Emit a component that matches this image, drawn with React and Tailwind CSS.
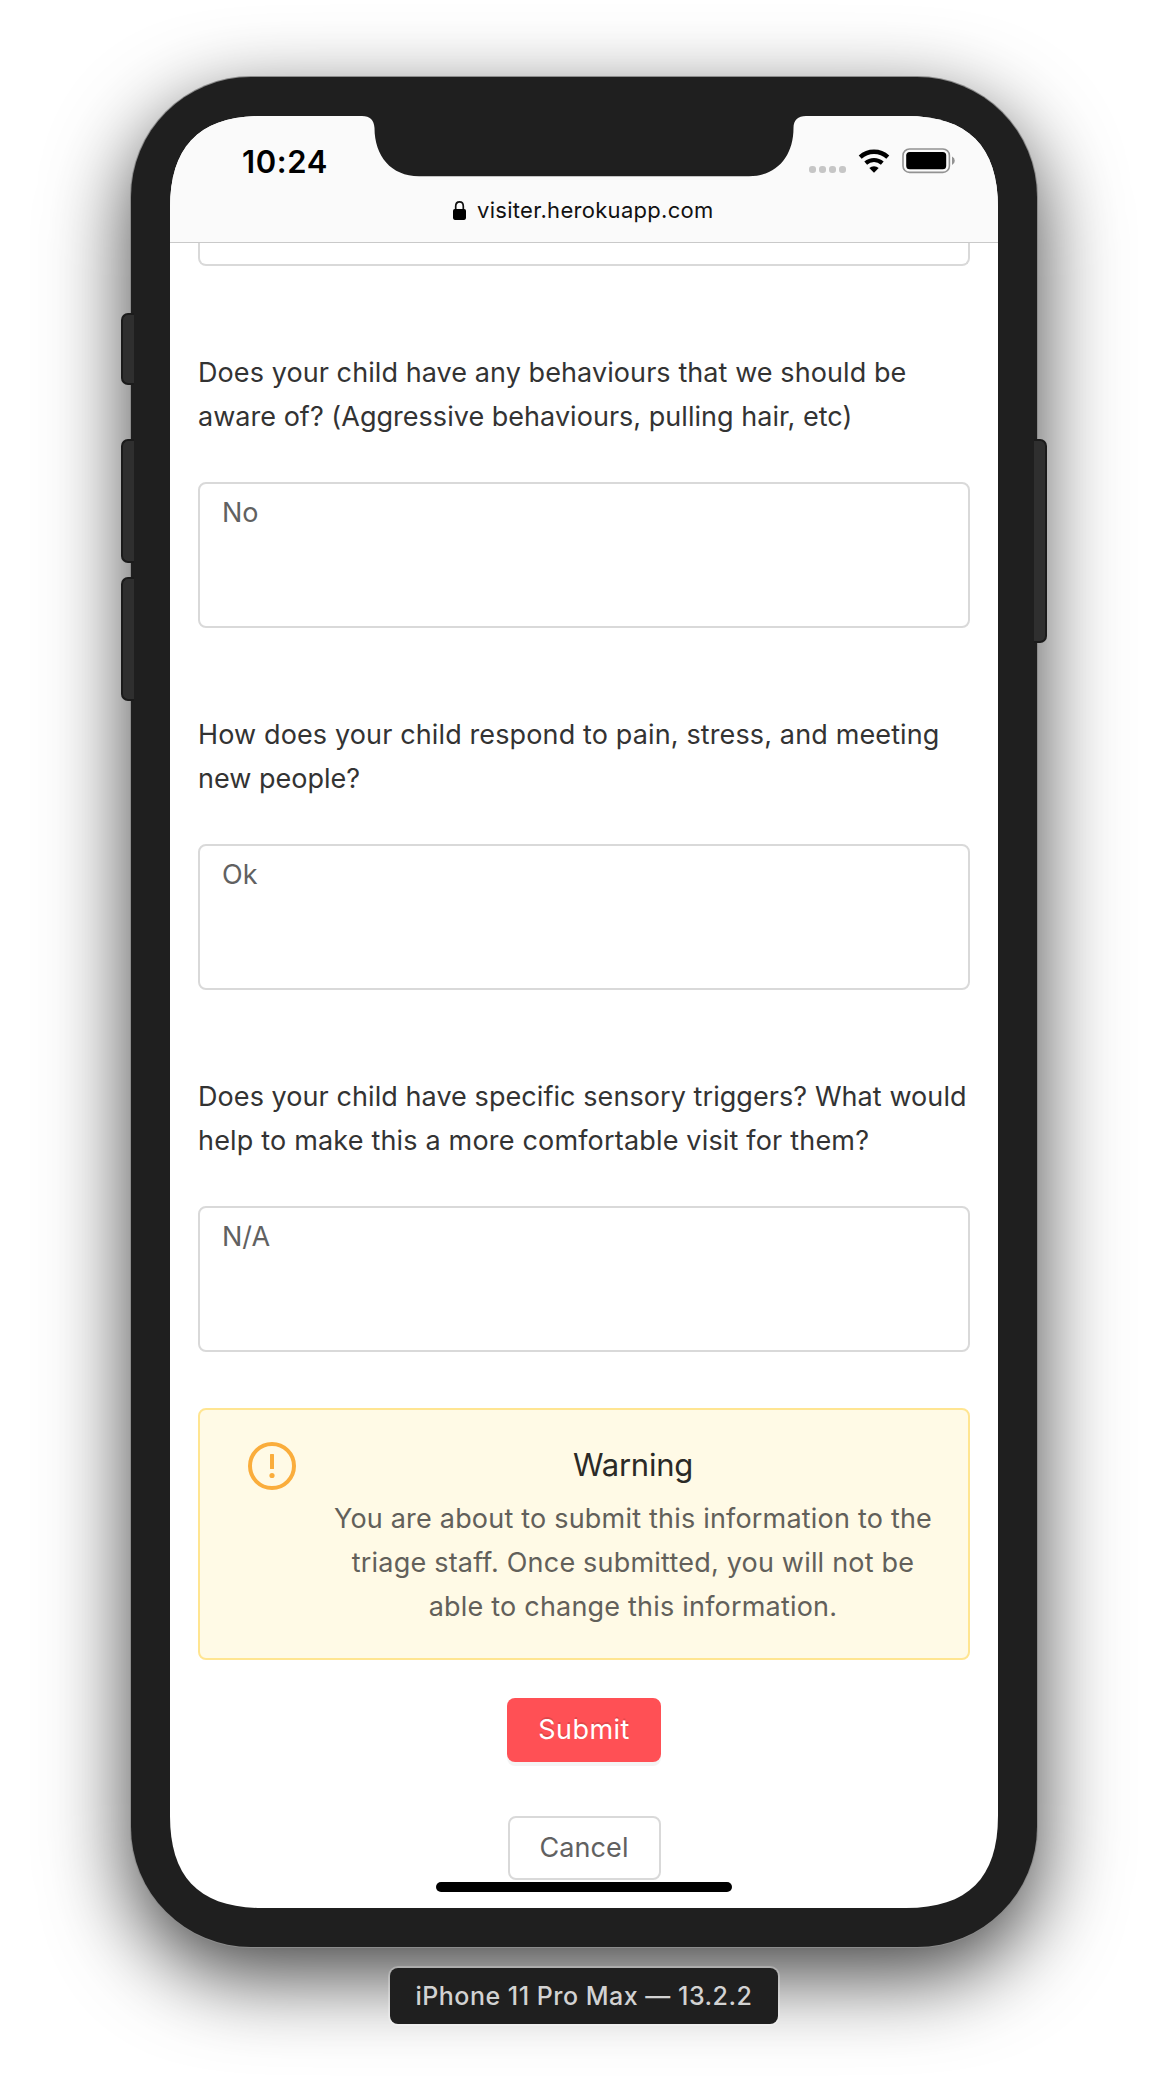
const QUESTIONS = [
  {
    lines: [
      { text: "Does your child have any behaviours that we should be", tracking: "tracking-[0.08px]" },
      { text: "aware of? (Aggressive behaviours, pulling hair, etc)", tracking: "tracking-[0.03px]" },
    ],
    answer: "No",
  },
  {
    lines: [
      { text: "How does your child respond to pain, stress, and meeting", tracking: "tracking-[0.13px]" },
      { text: "new people?", tracking: "tracking-[0.02px]" },
    ],
    answer: "Ok",
  },
  {
    lines: [
      { text: "Does your child have specific sensory triggers? What would", tracking: "tracking-[0.07px]" },
      { text: "help to make this a more comfortable visit for them?", tracking: "tracking-[0.18px]" },
    ],
    answer: "N/A",
  },
];

function Notch() {
  return (
    <svg className="absolute left-[190px] top-0 h-[61px] w-[448px]" viewBox="0 0 448 61" aria-hidden="true">
      <path
        d="M0 0H2C10 0 14 4 14.500 12C14.500 40 31 60.200 59 60.200H389C417 60.200 433.500 40 433.500 12C433.500 4 438 0 446 0H448V-1H0Z"
        fill="#1f1f1f"
      />
    </svg>
  );
}

function SignalDots() {
  return (
    <div className="mt-[24.500px] flex gap-[3px]">
      {[0, 1, 2, 3].map((dot) => (
        <span key={dot} className="size-[7px] rounded-[3px] bg-[#c6c6c6]" />
      ))}
    </div>
  );
}

function WifiIcon() {
  return (
    <svg className="mt-2 h-6 w-8" viewBox="0 0 32 24" aria-hidden="true">
      <path d="M2.200 8.100A20.500 20.500 0 0 1 29.800 8.100" fill="none" stroke="#000" strokeWidth="4.400" />
      <path d="M7.700 14.100A12.600 12.600 0 0 1 24.300 14.100" fill="none" stroke="#000" strokeWidth="4.200" />
      <path d="M16 23.700L11.300 19A7 7 0 0 1 20.700 19Z" fill="#000" />
    </svg>
  );
}

function BatteryIcon() {
  return (
    <svg className="mt-[7px] h-[26px] w-[54px]" viewBox="0 0 54 26" aria-hidden="true">
      <rect x="1" y="1" width="46.400" height="23.400" rx="6.500" fill="none" stroke="#929292" strokeWidth="1.600" />
      <rect x="4.200" y="4" width="40" height="17.200" rx="3.500" fill="#000" />
      <path d="M50 8.500Q52.800 9.700 52.800 12.700Q52.800 15.700 50 16.900Z" fill="#929292" />
    </svg>
  );
}

function LockIcon() {
  return (
    <svg className="mt-[9px] h-[19px] w-[13px]" viewBox="0 0 13 19" aria-hidden="true">
      <path d="M2.700 9V5.200C2.700 2.600 4.300 0.900 6.500 0.900S10.300 2.600 10.300 5.200V9" fill="none" stroke="#111" strokeWidth="1.700" />
      <rect x="0" y="7.900" width="13" height="11" rx="1.800" fill="#000" />
    </svg>
  );
}

function WarningIcon() {
  return (
    <svg className="size-12 shrink-0" viewBox="0 0 48 48" aria-hidden="true">
      <circle cx="24" cy="24" r="22" fill="none" stroke="#faad3c" strokeWidth="4" />
      <rect x="22" y="12" width="4" height="15" rx="0.500" fill="#faad3c" />
      <circle cx="24" cy="33.500" r="2.600" fill="#faad3c" />
    </svg>
  );
}

function BrowserHeader() {
  return (
    <header className="relative h-[127px] border-b border-[#c9c9c9] bg-[#fafafa] text-black">
      <Notch />
      <div className="flex h-[76px] items-start justify-between pr-[42px] pl-[72px] pt-[25px]">
        <span className="pt-px text-[31px] font-semibold leading-10 tracking-[0.6px]">10:24</span>
        <div className="flex items-start gap-3">
          <SignalDots />
          <WifiIcon />
          <BatteryIcon />
        </div>
      </div>
      <div className="flex h-9 gap-[11px] pl-[283px]">
        <LockIcon />
        <span className="text-[22px] leading-9 tracking-[0.3px] text-[#111]">visiter.herokuapp.com</span>
      </div>
    </header>
  );
}

function Question({ lines, answer }) {
  return (
    <section className="mt-[85px]">
      <label className="block text-[27px] leading-[44px] text-[#333]">
        {lines.map((line) => (
          <span key={line.text} className={`block whitespace-nowrap ${line.tracking}`}>
            {line.text}
          </span>
        ))}
      </label>
      <div className="mt-[43px] h-[146px] rounded-lg border-2 border-[#d9d9d9] bg-white pl-[22px] pt-[7px] text-[27px] leading-[44px] text-[#616161]">
        {answer}
      </div>
    </section>
  );
}

function WarningBox() {
  return (
    <section className="mt-14 flex h-[252px] rounded-lg border-2 border-[#ffe591] bg-[#fffae6] pr-[30px] pl-12 pt-8">
      <WarningIcon />
      <div className="ml-8 flex-1 text-center">
        <h2 className="mb-2.5 text-[31px] leading-[45px] tracking-[-0.25px] text-[#2b2a26]">Warning</h2>
        <p className="whitespace-nowrap text-[27px] leading-[44px] tracking-[0.2px] text-[#62605a]">
          You are about to submit this information to the
          <br />
          triage staff. Once submitted, you will not be
          <br />
          able to change this information.
        </p>
      </div>
    </section>
  );
}

export default function App() {
  return (
    <div className="flex h-[2096px] w-[1168px] flex-col items-center overflow-hidden bg-white pt-[77px] font-['Inter',sans-serif]">
      <div className="relative h-[1870px] w-[906px] shrink-0 rounded-[120px] bg-[#1f1f1f] p-[39px] shadow-[0_0_0_1px_#8c8c8c,0_28px_84px_rgba(0,0,0,0.75)]">
        <span className="absolute -left-2.5 top-[236px] h-[72px] w-[13px] rounded-l-[7px] border-2 border-r-0 border-[#1b1b1b] bg-[#2f2f2f]" />
        <span className="absolute -left-2.5 top-[362px] h-[124px] w-[13px] rounded-l-[7px] border-2 border-r-0 border-[#1b1b1b] bg-[#2f2f2f]" />
        <span className="absolute -left-2.5 top-[500px] h-[124px] w-[13px] rounded-l-[7px] border-2 border-r-0 border-[#1b1b1b] bg-[#2f2f2f]" />
        <span className="absolute -right-2.5 top-[362px] h-[204px] w-[13px] rounded-r-[7px] border-2 border-l-0 border-[#1b1b1b] bg-[#2f2f2f]" />

        <div className="relative h-[1792px] w-[828px] overflow-hidden bg-white [clip-path:path('M0_92C0_30_30_0_92_0H736C798_0_828_30_828_92V1700C828_1762_798_1792_736_1792H92C30_1792_0_1762_0_1700Z')]">
          <BrowserHeader />
          <main className="px-7">
            <div className="h-[23px] rounded-b-lg border-2 border-t-0 border-[#d9d9d9]" />
            {QUESTIONS.map((question) => (
              <Question key={question.answer} {...question} />
            ))}
            <WarningBox />
            <div className="flex flex-col items-center">
              <button className="mt-[38px] h-16 w-[154px] rounded-lg bg-[#ff5055] text-[27px] tracking-[0.45px] text-white shadow-[0_4px_0_rgba(0,0,0,0.045)] [text-shadow:0_-2px_0_rgba(0,0,0,0.12)]">
                Submit
              </button>
              <button className="mt-[54px] h-16 w-[153px] rounded-lg border-2 border-[#d9d9d9] bg-white text-[27px] tracking-[0.1px] text-[#616161]">
                Cancel
              </button>
            </div>
          </main>
          <div className="absolute bottom-4 left-[266px] h-2.5 w-[296px] rounded-full bg-black" />
        </div>
      </div>
      <div className="relative mt-[21px] h-14 w-[388px] shrink-0 rounded-lg bg-[#1f1f1f] text-center text-[25px] font-medium leading-[56px] tracking-[0.5px] text-[#d2d2d2] shadow-[0_0_0_2px_rgba(255,255,255,0.25)]">
        iPhone 11 Pro Max — 13.2.2
      </div>
    </div>
  );
}
